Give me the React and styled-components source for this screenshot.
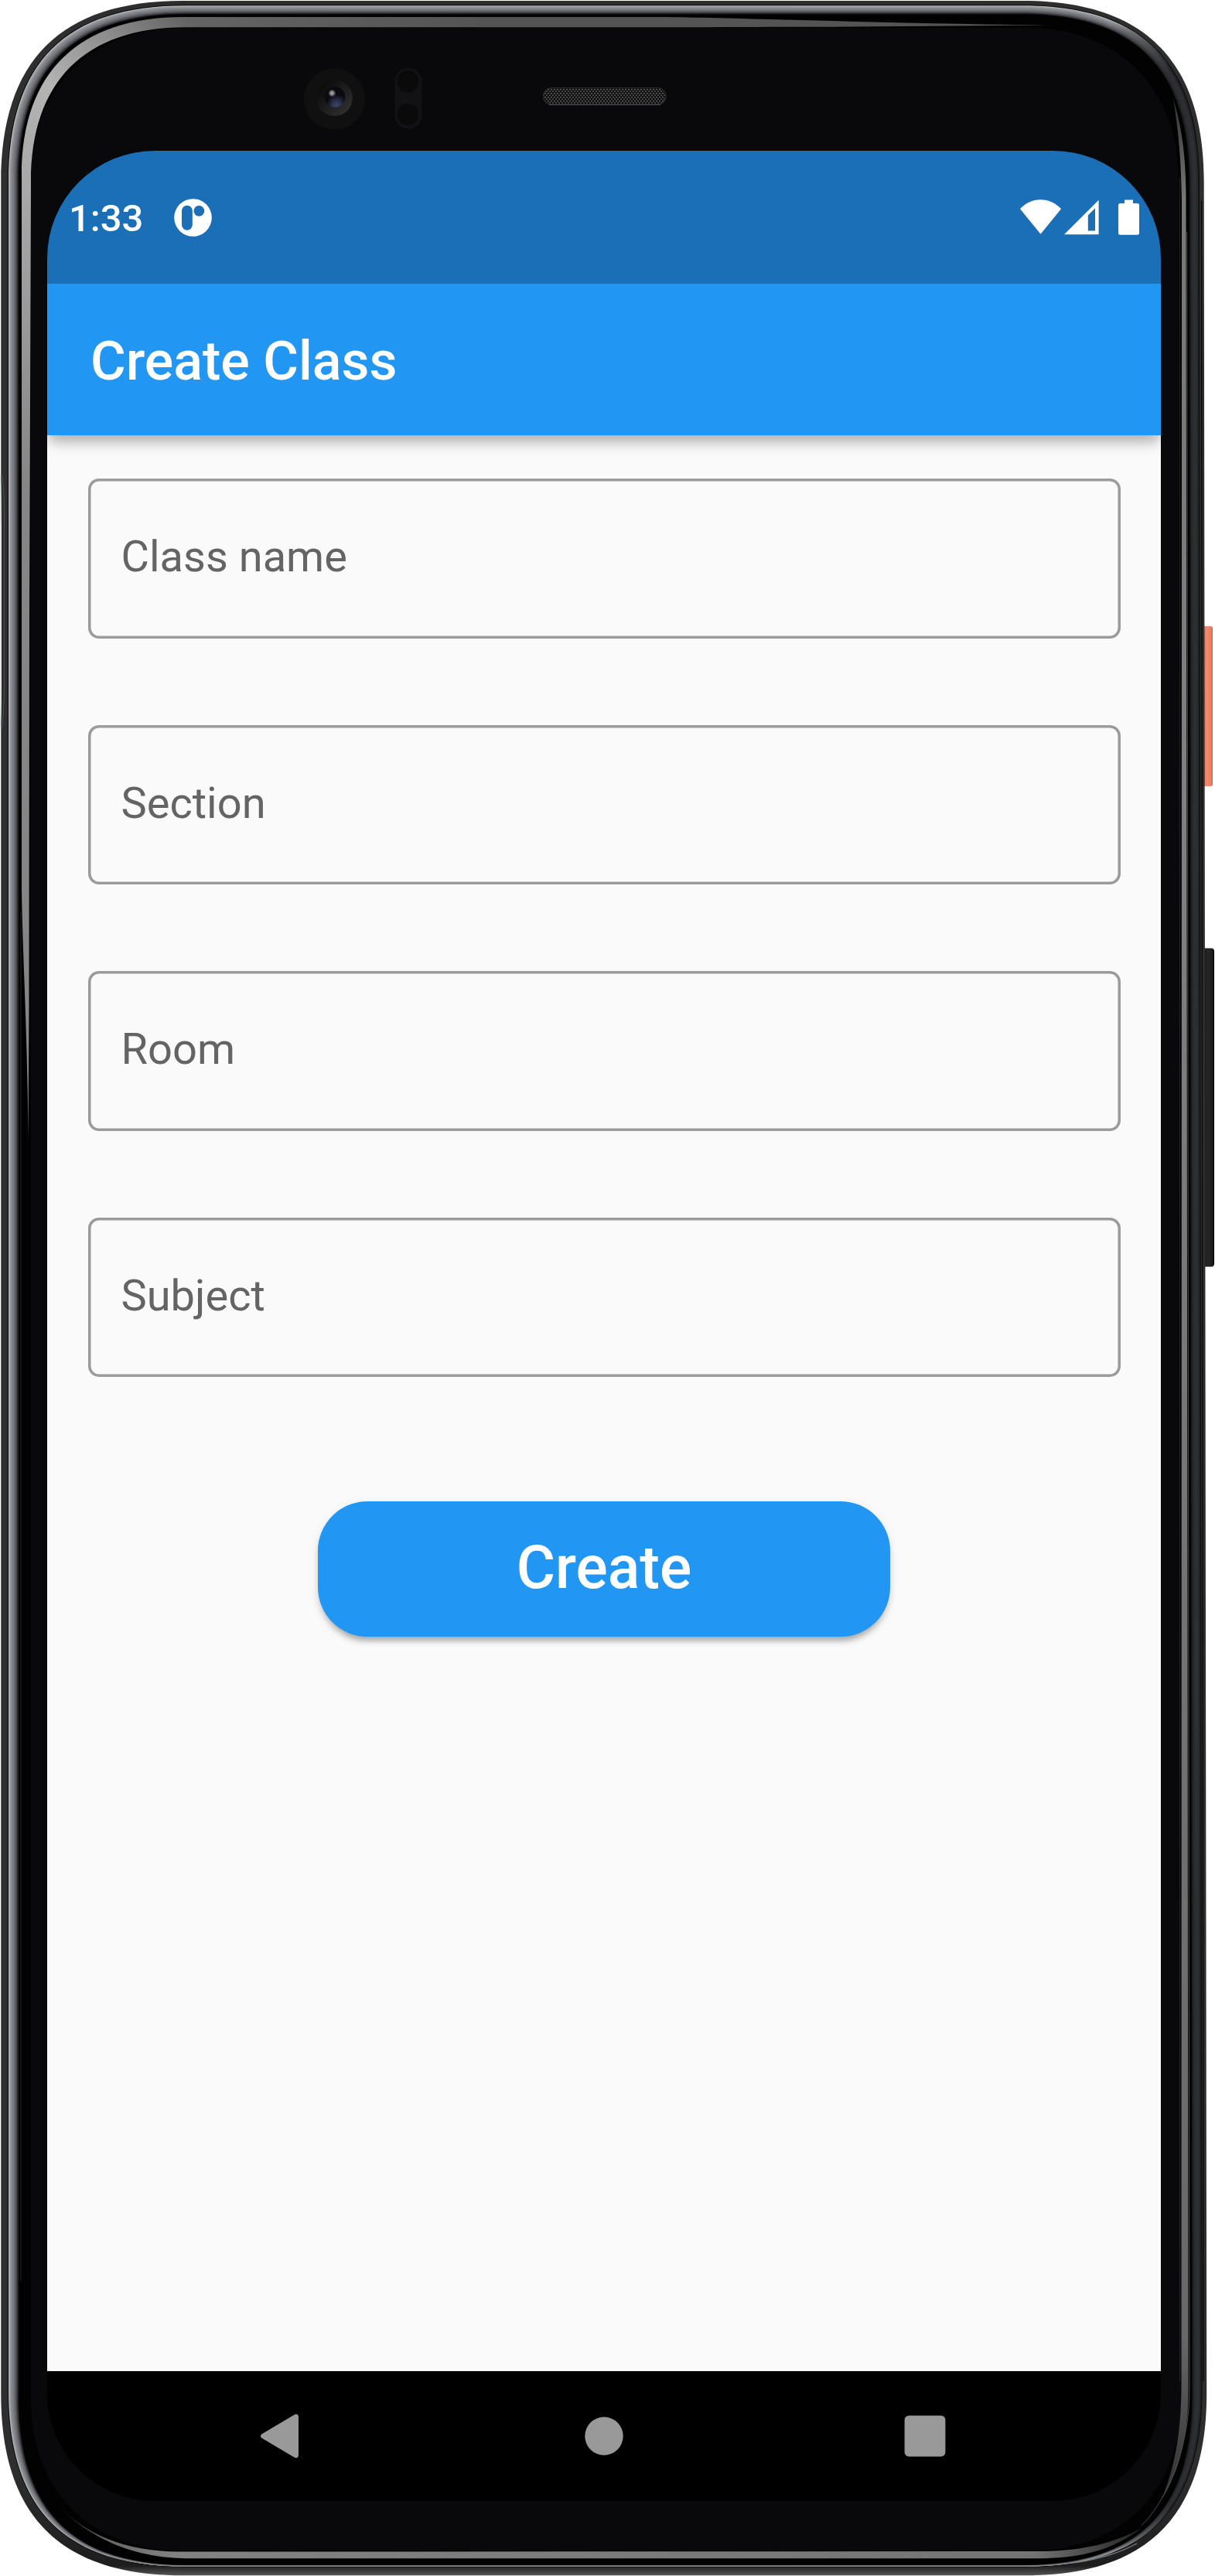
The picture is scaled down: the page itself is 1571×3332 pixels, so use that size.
import React from "react";
import styled, { createGlobalStyle } from "styled-components";

const GlobalStyle = createGlobalStyle`
  *, *::before, *::after { box-sizing: border-box; }
  body { margin: 0; background: #fff; }
`;

const Device = styled.div`
  position: relative;
  width: 1571px;
  height: 3332px;
  padding: 195px 70px 97px 61px;
  overflow: hidden;
  font-family: Roboto, "Noto Sans", sans-serif;
`;

const FrameArt = styled.svg`
  position: absolute;
  inset: 0;
  display: block;
`;

const Screen = styled.div`
  position: relative;
  display: flex;
  flex-direction: column;
  width: 1440px;
  height: 3040px;
  border-radius: 139px;
  overflow: hidden;
`;

const StatusBar = styled.div`
  position: relative;
  z-index: 2;
  display: flex;
  align-items: center;
  justify-content: space-between;
  height: 172px;
  flex: none;
  padding: 0 28px 0 28px;
  background: #1a6fb6;
  color: #fff;
`;

const StatusGroup = styled.div`
  display: flex;
  align-items: center;
  gap: ${(p) => p.$gap}px;
`;

const Clock = styled.span`
  font-size: 49px;
  font-weight: 500;
  line-height: 58px;
  width: 96px;
  white-space: nowrap;
  padding-top: 3px;
`;

const BatterySlot = styled.span`
  display: flex;
  padding-left: 21px;
`;

const AppBar = styled.header`
  position: relative;
  z-index: 1;
  display: flex;
  align-items: center;
  height: 196px;
  flex: none;
  padding: 3px 56px 0;
  background: #2196f3;
  box-shadow: 0 14px 17.5px -3.5px rgba(0, 0, 0, 0.18),
    0 7px 14px rgba(0, 0, 0, 0.1), 0 3.5px 18px rgba(0, 0, 0, 0.06);
`;

const Title = styled.h1`
  margin: 0;
  font-size: 70px;
  font-weight: 500;
  line-height: 82px;
  color: #fff;
`;

const Form = styled.main`
  display: flex;
  flex-direction: column;
  flex: 1;
  padding: 56px 52.5px 0;
  background: #fafafa;
`;

const Field = styled.div`
  display: flex;
  align-items: center;
  height: 206.5px;
  margin-bottom: 112px;
  padding: 0 43px 4.5px;
  border-radius: 14px;
  box-shadow: inset 0 0 0 3.5px #9b9b9b;
`;

const Label = styled.label`
  font-size: 56px;
  line-height: 66px;
  color: #646464;
`;

const CreateButton = styled.button`
  align-self: center;
  margin: 48.5px 0 0;
  width: 740px;
  height: 175px;
  padding: 0 0 1.5px;
  border: 0;
  border-radius: 64px;
  background: #2196f3;
  color: #fff;
  font: 500 77px/90px Roboto, sans-serif;
  box-shadow: 0 10.5px 6px -7px rgba(0, 0, 0, 0.18),
    0 7px 7px rgba(0, 0, 0, 0.12), 0 3.5px 14px rgba(0, 0, 0, 0.08);
`;

const NavBar = styled.nav`
  display: flex;
  justify-content: center;
  height: 168px;
  flex: none;
  background: #000;
`;

const NavButton = styled.div`
  display: flex;
  align-items: center;
  justify-content: center;
  width: 415px;
`;

/* Closed outline with long, soft corners: e = corner extent, c = handle offset. */
function shell(l, t, r, b, e, c) {
  return [
    `M${l},${t + e}`,
    `C${l},${t + c} ${l + c},${t} ${l + e},${t}`,
    `L${r - e},${t}`,
    `C${r - c},${t} ${r},${t + c} ${r},${t + e}`,
    `L${r + 3.5},${b - e}`,
    `C${r + 3.5},${b - c} ${r + 3.5 - c},${b} ${r + 3.5 - e},${b}`,
    `L${l + e},${b}`,
    `C${l + c},${b} ${l},${b - c} ${l},${b - e}`,
    "Z",
  ].join(" ");
}

/* Metal band, outermost to innermost: lit side shade and shaded side shade. */
const band = [
  ["#b2b5b9", "#1a1b1c"],
  ["#9a9ca0", "#252628"],
  ["#8b8d92", "#2c2d30"],
  ["#828489", "#2e2f32"],
  ["#797b80", "#2e2f32"],
  ["#6d6f74", "#2c2d30"],
  ["#5f6166", "#2a2b2e"],
  ["#4a4b4f", "#242527"],
  ["#303134", "#1a1b1c"],
  ["#161618", "#0c0c0d"],
];

function PhoneFrame() {
  return (
    <FrameArt width="1571" height="3332" viewBox="0 0 1571 3332">
      <defs>
        <linearGradient id="case" gradientUnits="userSpaceOnUse" x1="0" y1="3200" x2="0" y2="3332">
          <stop offset="0" stopColor="#2e2e2e" />
          <stop offset="0.9" stopColor="#1d1d1d" />
          <stop offset="1" stopColor="#5a5a5a" />
        </linearGradient>
        {band.map(([lit, dark], i) => (
          <linearGradient key={i} id={`band${i}`} gradientUnits="userSpaceOnUse" x1="0" y1="0" x2="1560" y2="0">
            <stop offset="0" stopColor={lit} />
            <stop offset="0.92" stopColor={lit} />
            <stop offset="0.97" stopColor={dark} />
            <stop offset="1" stopColor={dark} />
          </linearGradient>
        ))}
        <linearGradient id="gleam" gradientUnits="userSpaceOnUse" x1="0" y1="600" x2="600" y2="0">
          <stop offset="0" stopColor="#858585" />
          <stop offset="0.3" stopColor="#a6a6a6" />
          <stop offset="0.46" stopColor="#b4b4b4" />
          <stop offset="0.58" stopColor="#8c8c8c" />
          <stop offset="0.68" stopColor="#646464" />
          <stop offset="1" stopColor="#545454" />
        </linearGradient>
        <linearGradient id="sideGleam" gradientUnits="userSpaceOnUse" x1="0" y1="130" x2="0" y2="3240">
          <stop offset="0" stopColor="#333" />
          <stop offset="0.04" stopColor="#777" />
          <stop offset="0.3" stopColor="#808080" />
          <stop offset="0.93" stopColor="#686868" />
          <stop offset="1" stopColor="#2c2c2c" />
        </linearGradient>
        <linearGradient id="bottomGleam" gradientUnits="userSpaceOnUse" x1="70" y1="0" x2="1476" y2="0">
          <stop offset="0" stopColor="#222" />
          <stop offset="0.05" stopColor="#666" />
          <stop offset="0.11" stopColor="#828282" />
          <stop offset="0.9" stopColor="#757575" />
          <stop offset="1" stopColor="#222" />
        </linearGradient>
        <linearGradient id="power" x1="0" y1="0" x2="1" y2="0">
          <stop offset="0" stopColor="#e4644a" />
          <stop offset="0.5" stopColor="#f08a70" />
          <stop offset="0.85" stopColor="#ee7d60" />
          <stop offset="1" stopColor="#d9603f" />
        </linearGradient>
        <linearGradient id="volume" x1="0" y1="0" x2="1" y2="0">
          <stop offset="0" stopColor="#151515" />
          <stop offset="0.5" stopColor="#262626" />
          <stop offset="0.85" stopColor="#1c1c1c" />
          <stop offset="1" stopColor="#000" />
        </linearGradient>
        <linearGradient id="lens" x1="0" y1="0" x2="1" y2="1">
          <stop offset="0.2" stopColor="#0d0d0d" />
          <stop offset="1" stopColor="#363636" />
        </linearGradient>
        <radialGradient id="pupil" cx="0.58" cy="0.88" r="0.5">
          <stop offset="0" stopColor="#3c4766" />
          <stop offset="0.45" stopColor="#2b304a" />
          <stop offset="1" stopColor="#0c0a10" />
        </radialGradient>
        <radialGradient id="spark">
          <stop offset="0" stopColor="#a8a8a8" />
          <stop offset="0.4" stopColor="#8a8a8a" />
          <stop offset="1" stopColor="#8a8a8a" stopOpacity="0" />
        </radialGradient>
        <pattern id="mesh" width="4" height="5" patternUnits="userSpaceOnUse">
          <rect width="4" height="5" fill="#121212" />
          <rect x="0" y="0" width="2" height="1.4" fill="#606060" />
          <rect x="2" y="2.5" width="2" height="1.4" fill="#565656" />
        </pattern>
      </defs>

      <rect x="1553" y="810" width="15" height="207" rx="3" fill="url(#power)" />
      <rect x="1554" y="1226.5" width="16" height="412" rx="4" fill="url(#volume)" />

      <path d={shell(1.3, 1, 1556.7, 3331.3, 235, 77)} fill="url(#case)" />
      <path d="M0,612 C1.8,614 1.9,650 2,680 L2,880 C2,910 1.8,935 0,945 Z" fill="#e4e8e6" />
      <path d="M2,614 C5,622 5.5,650 5.5,680 L5.5,880 C5.5,910 4,935 2,943" fill="none" stroke="#4a534e" strokeWidth="1" />

      <path d={shell(10, 6.3, 1551, 3320.5, 229, 74)} fill="#080808" />
      {band.map((_, i) => (
        <path
          key={i}
          d={shell(11 + i * 1.35, 7.2 + i * 1.15, 1550.3 - i * 1.35, 3319.8 - i * 0.2, 228 - i, 73.5 - i * 0.3)}
          fill={`url(#band${i})`}
        />
      ))}
      <path d={shell(24.5, 18.6, 1537.5, 3317.4, 216, 70)} fill="#020202" />
      <path d={shell(40, 36, 1524, 3299.5, 195, 78)} fill="#09090b" />
      <path d="M27,1180 L27,2950" stroke="#252525" strokeWidth="1" />

      <path
        d="M36.5,1475 C36,1350 29,1230 28,1150 L28,227 C28,92 103,22 238,22 L855,22 C960,23 1160,31 1355,32.5 C1160,34 1000,35.3 855,35.3 L240,35.3 C110,35.3 40,105 40,235 L38,800 L37.5,1300 Z"
        fill="url(#gleam)"
      />
      <path
        d="M1517,128 C1530,170 1533,210 1533.5,250 L1536.5,3090 C1536.5,3150 1526,3195 1501,3235 C1518,3195 1527,3150 1527.5,3090 L1528,260 C1527,205 1524,170 1517,128 Z"
        fill="url(#sideGleam)"
      />
      <path d="M1534.7,300 L1538,3090 C1538,3190 1490,3256 1476,3266" fill="none" stroke="#4d4d4d" strokeWidth="1" />
      <path d="M1525.5,230 V3080" stroke="#252525" strokeWidth="1" />
      <path d="M1553.5,260 L1556,3080" stroke="#090909" strokeWidth="1.2" />
      <path
        d="M70,3236 C110,3279 163,3300 230,3300.5 L1350,3300 C1400,3299 1440,3290 1476,3270 C1440,3298 1400,3309 1340,3309.3 L240,3309.3 C168,3308 112,3281 70,3236 Z"
        fill="url(#bottomGleam)"
      />
      <path d="M150,3308 C185,3317 210,3319 240,3319 L1330,3319 C1400,3318 1440,3306 1470,3290" fill="none" stroke="#7d807f" strokeWidth="1.4" />

      <circle cx="432.5" cy="128" r="39.5" fill="#101010" />
      <circle cx="432.5" cy="126.7" r="23.3" fill="url(#lens)" />
      <circle cx="433" cy="125.5" r="13.5" fill="url(#pupil)" />
      <circle cx="429.3" cy="120.5" r="5" fill="url(#spark)" />
      <rect x="510.5" y="88" width="35" height="78.5" rx="17.5" fill="#121214" />
      <circle cx="527.5" cy="105.5" r="14" fill="#0a0a0b" />
      <circle cx="527.5" cy="148" r="14" fill="#0a0a0b" />
      <rect x="702.5" y="113.5" width="158.5" height="22" rx="11" fill="url(#mesh)" stroke="#282828" strokeWidth="1.2" />
      <path d="M710,135.5 H854" stroke="#585a5a" strokeWidth="1.2" />
    </FrameArt>
  );
}

const AppIcon = () => (
  <svg width="49" height="49" viewBox="0 0 49 49">
    <circle cx="24.5" cy="24.5" r="24.3" fill="#fff" />
    <rect x="10" y="8.7" width="13.8" height="32" rx="6.9" fill="#1a6fb6" />
    <circle cx="32.4" cy="15.8" r="6.9" fill="#1a6fb6" />
  </svg>
);

const WifiIcon = () => (
  <svg width="53" height="46" viewBox="0 0 53 46">
    <path d="M0,12.3 C7,4.7 16,0.3 26.5,0.3 C37,0.3 46,4.7 53,12.3 L26.5,44.8 Z" fill="#fff" />
  </svg>
);

const SignalIcon = () => (
  <svg width="45" height="46" viewBox="0 0 45 46">
    <path fillRule="evenodd" d="M0,45.2 L44.6,0.8 V45.2 Z M30.8,20.4 V40.4 H40 V11.2 Z" fill="#fff" />
  </svg>
);

const BatteryIcon = () => (
  <svg width="27" height="46" viewBox="0 0 27 46">
    <path d="M8,0.4 H19 V5 H24.5 Q27,5 27,7.5 V43.3 Q27,45.8 24.5,45.8 H2.5 Q0,45.8 0,43.3 V7.5 Q0,5 2.5,5 H8 Z" fill="#fff" />
  </svg>
);

const BackIcon = () => (
  <svg width="60" height="58" viewBox="0 0 60 58">
    <path d="M2.8,31.8 Q-1.2,29 2.8,26.2 L44,1.7 Q50,-1 50,5 V53 Q50,59 44,56.3 Z" fill="#999" />
  </svg>
);

const HomeIcon = () => (
  <svg width="50" height="50" viewBox="0 0 50 50">
    <circle cx="25" cy="25" r="24.7" fill="#999" />
  </svg>
);

const RecentsIcon = () => (
  <svg width="54" height="54" viewBox="0 0 54 54">
    <rect x="0.6" y="0.6" width="52.8" height="52.8" rx="5.5" fill="#999" />
  </svg>
);

const fields = ["Class name", "Section", "Room", "Subject"];

export default function App() {
  return (
    <>
      <GlobalStyle />
      <Device>
        <PhoneFrame />
        <Screen>
          <StatusBar>
            <StatusGroup $gap={40}>
              <Clock>1:33</Clock>
              <AppIcon />
            </StatusGroup>
            <StatusGroup $gap={4}>
              <WifiIcon />
              <SignalIcon />
              <BatterySlot>
                <BatteryIcon />
              </BatterySlot>
            </StatusGroup>
          </StatusBar>
          <AppBar>
            <Title>Create Class</Title>
          </AppBar>
          <Form>
            {fields.map((name) => (
              <Field key={name}>
                <Label>{name}</Label>
              </Field>
            ))}
            <CreateButton>Create</CreateButton>
          </Form>
          <NavBar>
            <NavButton><BackIcon /></NavButton>
            <NavButton><HomeIcon /></NavButton>
            <NavButton><RecentsIcon /></NavButton>
          </NavBar>
        </Screen>
      </Device>
    </>
  );
}
